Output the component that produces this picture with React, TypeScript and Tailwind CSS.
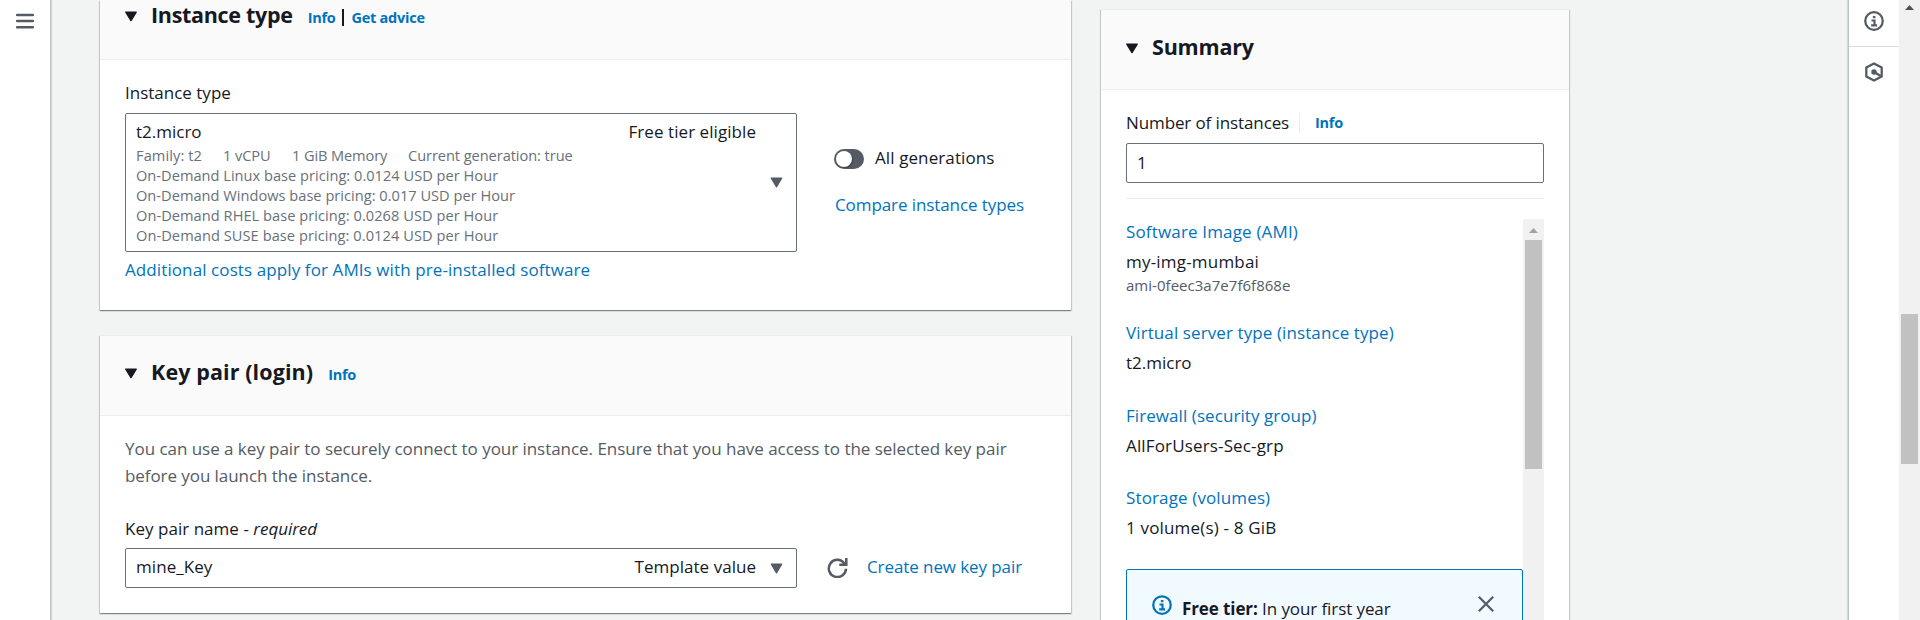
import React from 'react';

const cardShadow =
  'shadow-[0_1px_1px_0_rgba(0,28,36,0.3),1px_1px_1px_0_rgba(0,28,36,0.15),-1px_1px_1px_0_rgba(0,28,36,0.15)]';

function HeadingCaret() {
  return (
    <svg className="h-[11px] w-[12px] shrink-0" viewBox="0 0 12 11" fill="#16191f" stroke="#16191f" strokeWidth="1.4" strokeLinejoin="round">
      <path d="M.8 1.2h10.4L6 9.6z" />
    </svg>
  );
}

function SelectCaret() {
  return (
    <svg className="h-[11px] w-[13px] shrink-0" viewBox="0 0 13 11" fill="#545b64" stroke="#545b64" strokeWidth="1.2" strokeLinejoin="round">
      <path d="M1.3 1.1h10.4L6.5 9.9z" />
    </svg>
  );
}

function InfoIcon({ color }: { color: string }) {
  return (
    <svg className="h-5 w-5 shrink-0" viewBox="0 0 16 16" fill="none" stroke={color}>
      <circle cx="8" cy="8" r="7" strokeWidth="1.8" />
      <path d="M6 7.6h2.4V11.4M5.7 11.5h4.8" strokeWidth="1.7" />
      <path d="M7.1 4.9h2" strokeWidth="1.8" />
    </svg>
  );
}

function HexIcon() {
  return (
    <svg className="h-5 w-5" viewBox="0 0 20 20" fill="none" stroke="#545b64">
      <path d="M10 1.4l7.7 4.1v9L10 18.6l-7.7-4.1v-9z" strokeWidth="2.3" strokeLinejoin="round" />
      <circle cx="10" cy="10" r="2.7" fill="#545b64" stroke="none" />
      <path d="M10 10l6.6 4" strokeWidth="2.3" />
    </svg>
  );
}

function InstanceTypeCard() {
  return (
    <section className={`h-[310px] bg-white ${cardShadow}`}>
      <header className="flex h-[60px] border-b border-[#eaeded] bg-[#fafafa] pl-[25px]">
        <div className="flex h-8 items-center">
          <HeadingCaret />
        </div>
        <div className="ml-[14px] flex h-[29px] items-baseline">
          <h2 className="text-[21.5px] leading-[29px] font-bold tracking-[-0.3px]">Instance type</h2>
          <a className="ml-[15px] text-[14.5px] font-bold tracking-[-0.3px] text-[#0073bb]">Info</a>
          <span className="mt-[9px] ml-[7px] h-[17px] w-[2px] self-start bg-[#16191f]" />
          <a className="ml-[7px] text-[14.5px] font-bold tracking-[-0.25px] text-[#0073bb]">Get advice</a>
        </div>
      </header>
      <div className="flex gap-[37px] px-[25px] pt-5">
        <div className="w-[672px]">
          <label className="block leading-[25px]">Instance type</label>
          <div className="mt-[8px] flex h-[139px] items-center justify-between rounded-[2px] border border-[#687078] pr-[13px] pl-[10px]">
            <div className="flex-1 self-start pt-[5px]">
              <div className="flex justify-between pr-[14px] leading-[25px]">
                <span>t2.micro</span>
                <span className="tracking-[0.06px]">Free tier eligible</span>
              </div>
              <div className="mt-px text-[14.6px] leading-5 text-[#687078]">
                <div className="flex">
                  <span className="w-[87px] tracking-[0.1px]">Family: t2</span>
                  <span className="w-[69px] tracking-[-0.1px]">1 vCPU</span>
                  <span className="w-[116px] tracking-[-0.11px]">1 GiB Memory</span>
                  <span className="tracking-[-0.06px]">Current generation: true</span>
                </div>
                <div className="tracking-[0.02px]">On-Demand Linux base pricing: 0.0124 USD per Hour</div>
                <div className="tracking-[0.02px]">On-Demand Windows base pricing: 0.017 USD per Hour</div>
                <div className="tracking-[0.05px]">On-Demand RHEL base pricing: 0.0268 USD per Hour</div>
                <div className="tracking-[0.07px]">On-Demand SUSE base pricing: 0.0124 USD per Hour</div>
              </div>
            </div>
            <SelectCaret />
          </div>
          <a className="mt-[5px] block leading-[25px] tracking-[0.1px] text-[#0073bb]">
            Additional costs apply for AMIs with pre-installed software
          </a>
        </div>
        <div className="pt-[65px]">
          <div className="flex h-[25px] items-center">
            <span className="mt-[2px] flex h-5 w-[30px] items-center rounded-full bg-[#545b64] pl-[2px]">
              <span className="h-4 w-4 rounded-full bg-white shadow-[1px_1px_1px_rgba(0,0,0,0.3)]" />
            </span>
            <span className="ml-[11px] leading-[25px] tracking-[0.1px]">All generations</span>
          </div>
          <a className="mt-[22px] ml-px block leading-[25px] tracking-[-0.09px] text-[#0073bb]">Compare instance types</a>
        </div>
      </div>
    </section>
  );
}

function KeyPairCard() {
  return (
    <section className={`mt-[25px] h-[278px] border-t border-[#eaeded] bg-white ${cardShadow}`}>
      <header className="flex h-20 border-b border-[#eaeded] bg-[#fafafa] pt-[21px] pl-[25px]">
        <div className="flex h-8 items-center">
          <HeadingCaret />
        </div>
        <div className="ml-[14px] flex h-[29px] items-baseline">
          <h2 className="text-[21.5px] leading-[29px] font-bold tracking-[0.1px]">Key pair (login)</h2>
          <a className="ml-[15px] text-[14.5px] font-bold tracking-[-0.3px] text-[#0073bb]">Info</a>
        </div>
      </header>
      <div className="px-[25px] pt-[19px]">
        <p className="leading-[27px] tracking-[-0.04px] text-[#545b64]">
          You can use a key pair to securely connect to your instance. Ensure that you have access to the selected key pair
          <br />
          <span className="tracking-[-0.07px]">before you launch the instance.</span>
        </p>
        <label className="mt-[27px] block leading-[25px] tracking-[0.03px]">
          Key pair name - <i className="tracking-[-0.05px]">required</i>
        </label>
        <div className="mt-[7px] flex items-center">
          <div className="flex h-10 w-[672px] items-center rounded-[2px] border border-[#687078] pr-[13px] pl-[10px]">
            <span className="-mt-[3px] flex-1 tracking-[0.06px]">mine_Key</span>
            <span className="-mt-[3px] mr-[14px] tracking-[0.03px]">Template value</span>
            <SelectCaret />
          </div>
          <svg className="-mt-px ml-[30px] h-5 w-[21px]" viewBox="0 0 21 20" fill="none" stroke="#545b64" strokeWidth="2.5">
            <path d="M19 10.8A8.6 8.6 0 1 1 17.2 5.2L18.6 6.6" />
            <path d="M12.3 6.8H19.3V0" />
          </svg>
          <a className="-mt-[3px] ml-[19px] tracking-[-0.09px] text-[#0073bb]">Create new key pair</a>
        </div>
      </div>
    </section>
  );
}

function SummaryCard() {
  return (
    <section className={`mt-[9px] flex h-[640px] w-[468px] flex-col border-t border-[#eaeded] bg-white ${cardShadow}`}>
      <header className="flex h-20 shrink-0 border-b border-[#eaeded] bg-[#fafafa] pt-[22px] pl-[25px]">
        <div className="flex h-8 items-center">
          <HeadingCaret />
        </div>
        <h2 className="ml-[14px] text-[21.5px] leading-[29px] font-bold tracking-[-0.2px]">Summary</h2>
      </header>
      <div className="px-[25px] pt-5">
        <div className="flex h-[25px] items-center">
          <label className="leading-[25px] tracking-[-0.11px]">Number of instances</label>
          <span className="ml-[10px] h-5 w-px bg-[#eaeded]" />
          <a className="mt-px ml-[15px] text-[14.5px] font-bold tracking-[-0.3px] text-[#0073bb]">Info</a>
        </div>
        <div className="mt-[8px] flex h-10 items-center rounded-[2px] border border-[#687078] pl-[10px]">
          <span>1</span>
        </div>
        <div className="mt-[15px] h-px bg-[#eaeded]" />
        <div className="mt-5 flex h-[420px]">
          <div className="w-[397px] leading-[25px]">
            <a className="block tracking-[0.16px] text-[#0073bb]">Software Image (AMI)</a>
            <div className="mt-[5px] tracking-[0.2px]">my-img-mumbai</div>
            <div className="mt-px text-[15px] leading-5 tracking-[0.03px] text-[#545b64]">ami-0feec3a7e7f6f868e</div>
            <a className="mt-[25px] block tracking-[0.1px] text-[#0073bb]">Virtual server type (instance type)</a>
            <div className="mt-[5px]">t2.micro</div>
            <a className="mt-[28px] block tracking-[0.07px] text-[#0073bb]">Firewall (security group)</a>
            <div className="mt-[5px] tracking-[0.15px]">AllForUsers-Sec-grp</div>
            <a className="mt-[27px] block tracking-[0.13px] text-[#0073bb]">Storage (volumes)</a>
            <div className="mt-[5px] tracking-[0.17px]">1 volume(s) - 8 GiB</div>
            <div className="mt-[29px] flex h-[120px] items-start rounded-[2px] border border-[#0073bb] bg-[#f1faff] pt-[25px] pl-[25px]">
              <InfoIcon color="#0073bb" />
              <p className="mt-px ml-[10px]">
                <b className="font-bold tracking-[-0.1px]">Free tier:</b>
                <span className="tracking-[-0.09px]"> In your first year</span>
              </p>
              <svg className="mt-[1px] mr-[28px] ml-auto h-4 w-4" viewBox="0 0 16 16" stroke="#545b64" strokeWidth="2.2">
                <path d="M.8.8l14.4 14.4M15.2.8L.8 15.2" />
              </svg>
            </div>
          </div>
          <div className="flex w-[21px] flex-col items-center bg-[#f1f1f1]">
            <svg className="mt-[9px] h-[5px] w-[9px]" viewBox="0 0 9 5" fill="#a3a3a3">
              <path d="M4.5 0L9 5H0z" />
            </svg>
            <div className="mt-[7px] h-[229px] w-[17px] bg-[#c1c1c1]" />
          </div>
        </div>
      </div>
    </section>
  );
}

export default function App() {
  return (
    <div className="flex h-[620px] w-[1920px] overflow-hidden bg-[#f2f3f3] font-['Open_Sans',sans-serif] text-[17px] text-[#16191f]">
      <aside className="w-[51px] shrink-0 border-r border-[#bcc3c5] bg-white pt-[13px] pl-4 shadow-[1px_0_1px_rgba(0,28,36,0.12)]">
        <svg className="h-4 w-[18px]" viewBox="0 0 18 16" stroke="#545b64" strokeWidth="2.4" strokeLinecap="round">
          <path d="M1 2h16M1 8h16M1 14.3h16" />
        </svg>
      </aside>
      <main className="flex flex-1 gap-[30px] pl-[49px]">
        <div className="w-[971px]">
          <InstanceTypeCard />
          <KeyPairCard />
        </div>
        <SummaryCard />
      </main>
      <aside className="w-[51px] shrink-0 border-l border-[#bcc3c5] bg-white shadow-[-1px_0_1px_rgba(0,28,36,0.12)]">
        <div className="flex h-[47px] justify-center border-b border-[#d5dbdb] pt-[11px]">
          <InfoIcon color="#545b64" />
        </div>
        <div className="flex justify-center pt-[15px]">
          <HexIcon />
        </div>
      </aside>
      <div className="flex w-[21px] shrink-0 flex-col items-center bg-[#f1f1f1]">
        <svg className="mt-[5px] h-[5px] w-[9px]" viewBox="0 0 9 5" fill="#505050">
          <path d="M4.5 0L9 5H0z" />
        </svg>
        <div className="mt-[304px] h-[150px] w-[17px] bg-[#c1c1c1]" />
      </div>
    </div>
  );
}
